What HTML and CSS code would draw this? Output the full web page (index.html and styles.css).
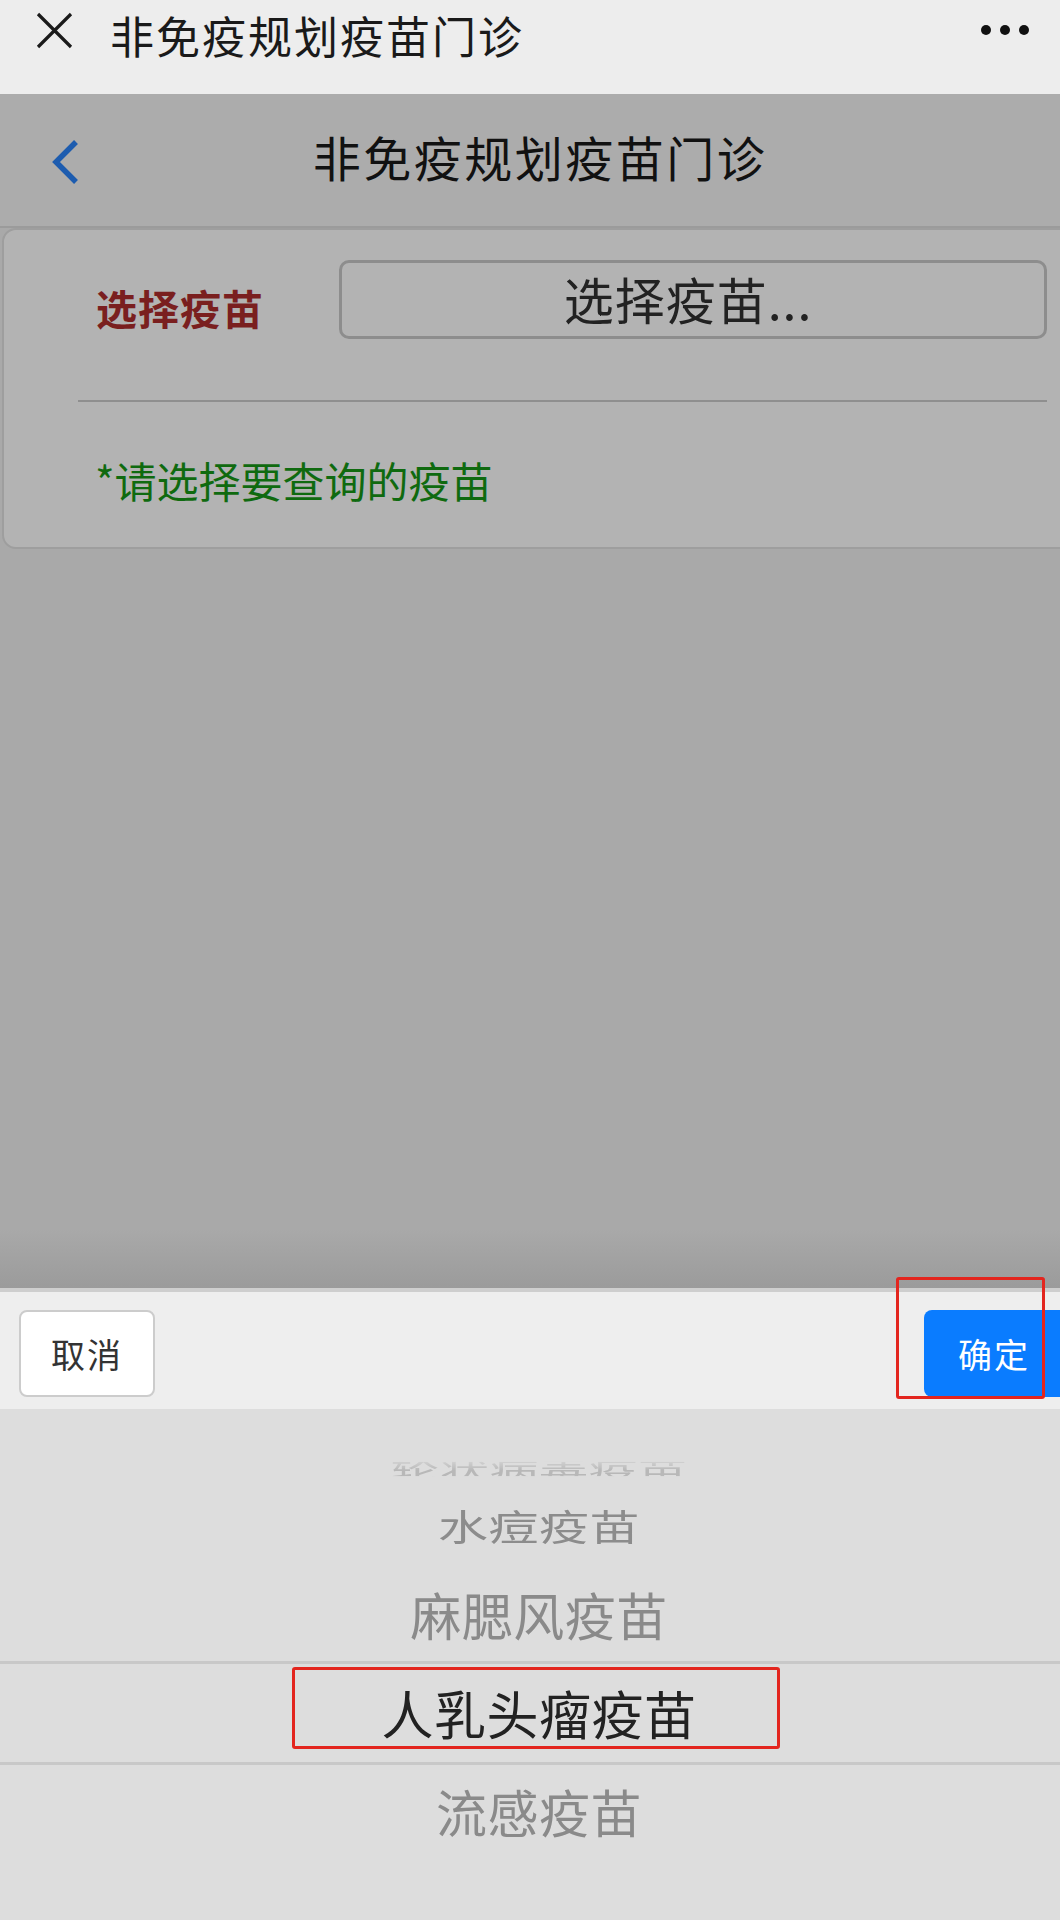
FILE: index.html
```html
<!DOCTYPE html>
<html lang="zh-CN">
<head>
    <meta charset="UTF-8">
    <meta name="viewport" content="width=device-width, initial-scale=1.0">
    <title>非免疫规划疫苗门诊</title>
    <link rel="stylesheet" href="styles.css">
</head>
<body>
    <!-- wechat top bar -->
    <div class="wx-bar">
        <svg class="wx-close" width="37" height="37" viewBox="0 0 37 37">
            <path d="M2 2 L35 35 M35 2 L2 35" stroke="#1a1a1a" stroke-width="3.2" fill="none"/>
        </svg>
        <div class="wx-title">非免疫规划疫苗门诊</div>
        <svg class="wx-more" width="48" height="12" viewBox="0 0 48 12">
            <circle cx="5" cy="6" r="5" fill="#111"/>
            <circle cx="24" cy="6" r="5" fill="#111"/>
            <circle cx="43" cy="6" r="5" fill="#111"/>
        </svg>
    </div>

    <!-- page under the picker mask -->
    <div class="masked">
        <div class="nav">
            <svg class="nav-back" width="30" height="46" viewBox="0 0 30 46">
                <polyline points="25,3 5,23 25,43" stroke="#1d5caf" stroke-width="5.5" fill="none"/>
            </svg>
            <div class="nav-title">非免疫规划疫苗门诊</div>
            <div></div>
        </div>

        <div class="card">
            <div class="field">
                <div class="field-label">选择疫苗</div>
                <div class="select-box">选择疫苗...</div>
            </div>
            <div class="divider"></div>
            <div class="hint">*请选择要查询的疫苗</div>
        </div>

        <div class="filler"></div>
    </div>

    <!-- picker -->
    <div class="toolbar">
        <button class="btn btn-cancel">取消</button>
        <button class="btn btn-ok">确定</button>
        <div class="mark mark-ok"></div>
    </div>

    <div class="wheel">
        <div class="item item-far2">轮状病毒疫苗</div>
        <div class="item item-far1">水痘疫苗</div>
        <div class="item item-near item-up">麻腮风疫苗</div>
        <div class="item item-selected">
            人乳头瘤疫苗
            <div class="mark mark-sel"></div>
        </div>
        <div class="item item-near item-down">流感疫苗</div>
    </div>
</body>
</html>
```

FILE: styles.css
```css
html, body {
    margin: 0;
    padding: 0;
}
body {
    width: 1060px;
    height: 1920px;
    overflow: hidden;
    font-family: "Noto Sans CJK SC", "Noto Sans", sans-serif;
    background-color: #dddddd;
}

/* wechat bar */
.wx-bar {
    height: 94px;
    background-color: #ededed;
    display: flex;
    align-items: flex-start;
    padding: 12px 31px 0 36px;
    box-sizing: border-box;
}
.wx-close {
    flex: none;
}
.wx-title {
    margin-left: 37px;
    font-size: 44px;
    line-height: 46px;
    letter-spacing: 2px;
    color: #1a1a1a;
    flex: 1;
}
.wx-more {
    margin-top: 12px;
    flex: none;
}

/* masked page */
.masked {
    height: 1194px;
    display: flex;
    flex-direction: column;
    background-color: #a9a9a9;
}
.nav {
    height: 132px;
    flex: none;
    display: grid;
    grid-template-columns: 1fr auto 1fr;
    align-items: center;
    padding-left: 20px;
    background-color: #acacac;
    border-bottom: 2px solid #9b9b9b;
}
.nav-back {
    margin-left: 31px;
    margin-top: 4px;
}
.nav-title {
    font-size: 48px;
    letter-spacing: 2.5px;
    color: #111111;
    margin-top: -8px;
}

.card {
    flex: none;
    margin: 0 -20px 0 2px;
    padding: 30px 31px 39px 74px;
    background-color: #b3b3b3;
    border: 2px solid #9e9e9e;
    border-radius: 14px;
}
.field {
    display: flex;
    align-items: center;
}
.field-label {
    flex: 0 0 261px;
    box-sizing: border-box;
    padding: 14px 0 0 18px;
    font-size: 41px;
    font-weight: bold;
    letter-spacing: 1px;
    color: #7a1f1f;
}
.select-box {
    flex: 1;
    height: 79px;
    box-sizing: border-box;
    border: 3px solid #8d8d8d;
    border-radius: 10px;
    display: flex;
    align-items: center;
    justify-content: center;
    font-size: 50px;
    letter-spacing: 1px;
    color: #222222;
    padding: 0 10px 4px 0;
}
.divider {
    height: 2px;
    margin-top: 61px;
    background-color: #8f8f8f;
}
.hint {
    margin-top: 50px;
    padding-left: 17px;
    font-size: 42px;
    line-height: 56px;
    color: #0f6a0f;
}
.filler {
    flex: 1;
    background: linear-gradient(#a9a9a9 92%, #9b9b9b);
}

/* picker toolbar */
.toolbar {
    position: relative;
    height: 121px;
    border-top: 4px solid #cecece;
    background-color: #eeeeee;
    display: flex;
    justify-content: space-between;
    align-items: flex-start;
    padding: 18px 0 0 19px;
    box-sizing: border-box;
}
.btn {
    height: 87px;
    border-radius: 8px;
    font-family: inherit;
    font-size: 34px;
    letter-spacing: 2px;
    padding: 0;
}
.btn-cancel {
    width: 136px;
    background-color: #ffffff;
    border: 2px solid #cccccc;
    color: #333333;
}
.btn-ok {
    width: 150px;
    margin-right: -14px;
    background-color: #0a7cff;
    border: none;
    color: #ffffff;
    padding-right: 10px;
}

/* red annotation frames */
.mark {
    position: absolute;
    border: 3px solid #e3251e;
    border-radius: 3px;
    box-sizing: border-box;
}
.mark-ok {
    left: 896px;
    top: -15px;
    width: 149px;
    height: 122px;
}
.mark-sel {
    left: 292px;
    top: 3px;
    width: 488px;
    height: 82px;
}

/* wheel */
.wheel {
    padding-top: 46px;
    padding-left: 18px;
    background-color: #dddddd;
}
.item {
    display: flex;
    align-items: center;
    justify-content: center;
    font-size: 51px;
    line-height: 1;
    color: #8a8a8a;
    letter-spacing: 0.5px;
}
.item-far2 {
    height: 28px;
    font-size: 49px;
    color: #b8b8b8;
    transform: scaleY(0.52);
    -webkit-mask-image: linear-gradient(rgba(0, 0, 0, 0.35), #000 60%);
    mask-image: linear-gradient(rgba(0, 0, 0, 0.35), #000 60%);
}
.item-far1 {
    height: 84px;
    font-size: 50px;
    color: #8c8c8c;
    transform: scaleY(0.72);
}
.item-up {
    height: 94px;
}
.item-selected {
    position: relative;
    height: 98px;
    margin-left: -18px;
    padding-left: 18px;
    border-top: 3px solid #c8c8c8;
    border-bottom: 3px solid #c8c8c8;
    font-size: 52px;
    color: #222222;
}
.item-down {
    height: 92px;
}
```
